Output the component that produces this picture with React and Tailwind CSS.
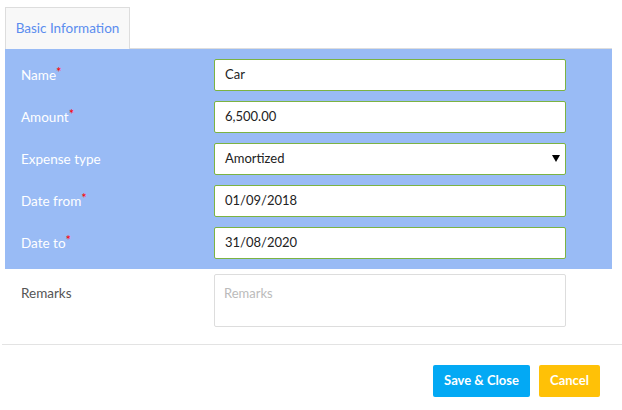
import React from "react"

const rows = [
  { label: "Name", required: true, value: "Car" },
  { label: "Amount", required: true, value: "6,500.00" },
  { label: "Expense type", required: false, value: "Amortized", select: true },
  { label: "Date from", required: true, value: "01/09/2018" },
  { label: "Date to", required: true, value: "31/08/2020" },
]

const App = () => {
  return (
    <div className="w-[622px] h-[410px] bg-white text-[13px]" style={{ fontFamily: "Lato, 'Open Sans', sans-serif" }}>
      <div className="pt-[7px] px-[5px] w-[617px]">
        <div className="flex">
          <div className="w-[125px] h-[42px] border border-b-0 border-[#dddddd] bg-[#f8f8f8] flex items-center justify-center text-[13.5px] text-[#5b8def] -mb-px relative z-10">
            Basic Information
          </div>
        </div>
        <div className="border-t border-[#dddddd] bg-[#99bbf5] py-[10px] pl-[16px] flex flex-col gap-[10px]">
          {rows.map((row) => (
            <div key={row.label} className="flex items-center h-[32px]">
              <div className="w-[193px] text-white text-[13.5px]">
                {row.label}
                {row.required && <span className="text-[#ff0000] text-[13px] relative -top-[3px]">*</span>}
              </div>
              <div className="w-[352px] h-[32px] bg-white border border-[#7cb342] rounded-[2px] flex items-center pl-[10px] pr-[5px] text-[#222222]">
                <span className="flex-1">{row.value}</span>
                {row.select && (
                  <svg width="8" height="7" viewBox="0 0 8 7" className="mb-[1px]">
                    <path d="M0 0H8L4 7Z" fill="#000" />
                  </svg>
                )}
              </div>
            </div>
          ))}
        </div>
        <div className="flex pl-[16px] pt-[5px]">
          <div className="w-[193px] pt-[9px] text-[#555555] text-[13.5px]">Remarks</div>
          <div className="w-[352px] h-[53px] border border-[#dddddd] rounded-[2px] px-[9px] pt-[9px] text-[#bbbbbb]">
            Remarks
          </div>
        </div>
      </div>
      <div className="mt-[17px] ml-[2px] border-t border-[#e3e3e3]"></div>
      <div className="flex justify-end gap-[9px] pr-[22px] pt-[20px]">
        <button className="h-[32px] w-[97px] bg-[#03a9f4] text-white font-bold rounded-[2px]">Save &amp; Close</button>
        <button className="h-[32px] w-[61px] bg-[#ffc107] text-white font-bold rounded-[2px]">Cancel</button>
      </div>
    </div>
  )
}

export default App
